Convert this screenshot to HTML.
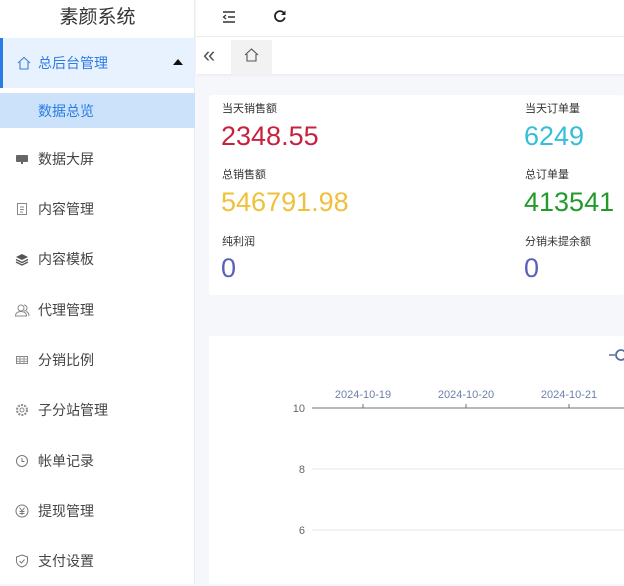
<!DOCTYPE html>
<html><head><meta charset="utf-8"><style>
*{margin:0;padding:0;box-sizing:border-box}
body{width:624px;height:584px;overflow:hidden;font-family:"Liberation Sans","Noto Sans CJK SC",sans-serif;background:#f5f7fb;position:relative}
.abs{position:absolute}
.side{left:0;top:0;width:195px;height:584px;background:#fff;border-right:1px solid #e8eaee}
.logo{left:0;top:2px;width:195px;height:37px;text-align:center;font-size:19px;line-height:32px;color:#333}
.item{left:0;width:195px;height:50px;font-size:14px;color:#444;display:flex;align-items:center;padding-left:38px}
.ic{position:absolute;left:14px;top:17px;width:16px;height:16px}
.hdr{left:196px;top:0;width:428px;height:37px;background:#fff;border-bottom:1px solid #eee}
.tabs{left:196px;top:37px;width:428px;height:37px;background:#fff;box-shadow:0 1px 3px rgba(0,0,0,.06)}
.lbl{font-size:11px;color:#333}
.val{font-size:27px}
</style></head><body>
<div class="abs side"></div>
<div class="abs logo">素颜系统</div>
<div class="abs item" style="top:38px;height:50px;background:#e8f2fe;color:#2a7be4;border-left:3px solid #2a7be4;padding-left:35px">
<svg class="ic" viewBox="0 0 16 16" style="left:13px"><path d="M2 8L8 2.5 14 8M4 7v7h8V7" fill="none" stroke="#3a7fd8" stroke-width="1.1"/></svg>总后台管理
<svg class="abs" style="left:170px;top:21px" width="10" height="6" viewBox="0 0 10 6"><path d="M0 6L5 0 10 6z" fill="#111"/></svg></div>
<div class="abs item" style="top:93px;height:35px;background:#cce2fb;color:#2a7be4">数据总览</div>
<div class="abs item" style="top:134px"><svg class="ic" viewBox="0 0 16 16"><rect x="2" y="4" width="12" height="7" rx="1" fill="#666"/><rect x="7" y="11" width="2" height="2" fill="#666"/></svg>数据大屏</div>
<div class="abs item" style="top:184px"><svg class="ic" viewBox="0 0 16 16"><rect x="3.5" y="2.5" width="9" height="11" fill="none" stroke="#888"/><path d="M6 6h4M6 8.5h4M6 11h3" stroke="#888"/></svg>内容管理</div>
<div class="abs item" style="top:234px"><svg class="ic" viewBox="0 0 16 16"><path d="M2 6l6-3 6 3-6 3z" fill="#555"/><path d="M2 8.5l6 3 6-3M2 11l6 3 6-3" fill="none" stroke="#555" stroke-width="1.3"/></svg>内容模板</div>
<div class="abs item" style="top:285px"><svg class="ic" viewBox="0 0 16 16"><circle cx="7" cy="6" r="3" fill="none" stroke="#888"/><path d="M1.5 14c0-3 2.5-4.5 5.5-4.5s5.5 1.5 5.5 4.5zM10 3a3 3 0 0 1 0 6M12 9.5c2 .5 3 2 3 4.5" fill="none" stroke="#888"/></svg>代理管理</div>
<div class="abs item" style="top:335px"><svg class="ic" viewBox="0 0 16 16"><rect x="2.5" y="4.5" width="11" height="7" fill="none" stroke="#888"/><path d="M6 4.5v7M10 4.5v7M2.5 7h11M2.5 9.3h11" stroke="#888" stroke-width=".8"/></svg>分销比例</div>
<div class="abs item" style="top:385px"><svg class="ic" viewBox="0 0 16 16"><circle cx="8" cy="8" r="5" fill="none" stroke="#888" stroke-dasharray="2 1.2" stroke-width="2"/><circle cx="8" cy="8" r="2" fill="none" stroke="#888"/></svg>子分站管理</div>
<div class="abs item" style="top:436px"><svg class="ic" viewBox="0 0 16 16"><circle cx="8" cy="8" r="5.5" fill="none" stroke="#777"/><path d="M8 5v3.5h2.5" fill="none" stroke="#777"/></svg>帐单记录</div>
<div class="abs item" style="top:486px"><svg class="ic" viewBox="0 0 16 16"><circle cx="8" cy="8" r="6" fill="none" stroke="#777"/><path d="M5.5 4.5L8 8l2.5-3.5M8 8v4M5.5 8.5h5M5.5 10.5h5" fill="none" stroke="#777" stroke-width=".9"/></svg>提现管理</div>
<div class="abs item" style="top:536px"><svg class="ic" viewBox="0 0 16 16"><path d="M8 2l5.5 2v4c0 3-2.5 5-5.5 6-3-1-5.5-3-5.5-6V4z" fill="none" stroke="#777"/><path d="M5.5 8l2 2 3-3.5" fill="none" stroke="#777"/></svg>支付设置</div>

<div class="abs hdr"></div>
<svg class="abs" style="left:222px;top:10px" width="14" height="14" viewBox="0 0 14 14"><path d="M1 2h12M6 7h7M1 12h12" stroke="#333" stroke-width="1.4"/><path d="M4 5L1.5 7 4 9" fill="none" stroke="#333" stroke-width="1.2"/></svg>
<svg class="abs" style="left:273px;top:9px" width="14" height="14" viewBox="0 0 14 14"><path d="M11.5 5A5 5 0 1 0 11.8 8.5" fill="none" stroke="#222" stroke-width="1.8"/><path d="M12.5 1.5v4.5h-4.5z" fill="#222"/></svg>
<div class="abs tabs"></div>
<div class="abs" style="left:203px;top:43px;font-size:22px;color:#555;line-height:24px">«</div>
<div class="abs" style="left:231px;top:40px;width:41px;height:34px;background:#f2f2f2"></div>
<svg class="abs" style="left:244px;top:48px" width="15" height="14" viewBox="0 0 15 14"><path d="M1 7L7.5 1 14 7M3 6v7h9V6" fill="none" stroke="#555" stroke-width="1.1"/></svg>

<div class="abs" style="left:209px;top:95px;width:415px;height:200px;background:#fff;border-radius:3px"></div>
<div class="abs lbl" style="left:222px;top:100px">当天销售额</div>
<div class="abs val" style="left:221px;top:121px;color:#c8213e">2348.55</div>
<div class="abs lbl" style="left:222px;top:166px">总销售额</div>
<div class="abs val" style="left:221px;top:187px;color:#efc13a">546791.98</div>
<div class="abs lbl" style="left:222px;top:233px">纯利润</div>
<div class="abs val" style="left:221px;top:253px;color:#5a5fc0">0</div>
<div class="abs lbl" style="left:525px;top:100px">当天订单量</div>
<div class="abs val" style="left:524px;top:121px;color:#33bfd8">6249</div>
<div class="abs lbl" style="left:525px;top:166px">总订单量</div>
<div class="abs val" style="left:524px;top:187px;color:#249a2c">413541</div>
<div class="abs lbl" style="left:525px;top:233px">分销未提余额</div>
<div class="abs val" style="left:524px;top:253px;color:#5a5fc0">0</div>

<div class="abs" style="left:209px;top:336px;width:415px;height:248px;background:#fff"></div>
<svg class="abs" style="left:209px;top:336px" width="415" height="248" viewBox="0 0 415 248" font-family="Liberation Sans, sans-serif" font-size="11">
<path d="M400 19h6" stroke="#5a6fa0" stroke-width="1.5"/><circle cx="412" cy="19" r="5" fill="none" stroke="#5a6fa0" stroke-width="1.8"/>
<line x1="103" y1="72" x2="415" y2="72" stroke="#6e7079"/>
<line x1="103" y1="133" x2="415" y2="133" stroke="#e6e6e6"/>
<line x1="103" y1="194" x2="415" y2="194" stroke="#e6e6e6"/>
<path d="M154 68v4M257 68v4M360 68v4" stroke="#6e7079"/>
<g fill="#6e7fa8" text-anchor="middle"><text x="154" y="62">2024-10-19</text><text x="257" y="62">2024-10-20</text><text x="360" y="62">2024-10-21</text></g>
<g fill="#666" text-anchor="end"><text x="96" y="76">10</text><text x="96" y="137">8</text><text x="96" y="198">6</text></g>
</svg>
</body></html>
